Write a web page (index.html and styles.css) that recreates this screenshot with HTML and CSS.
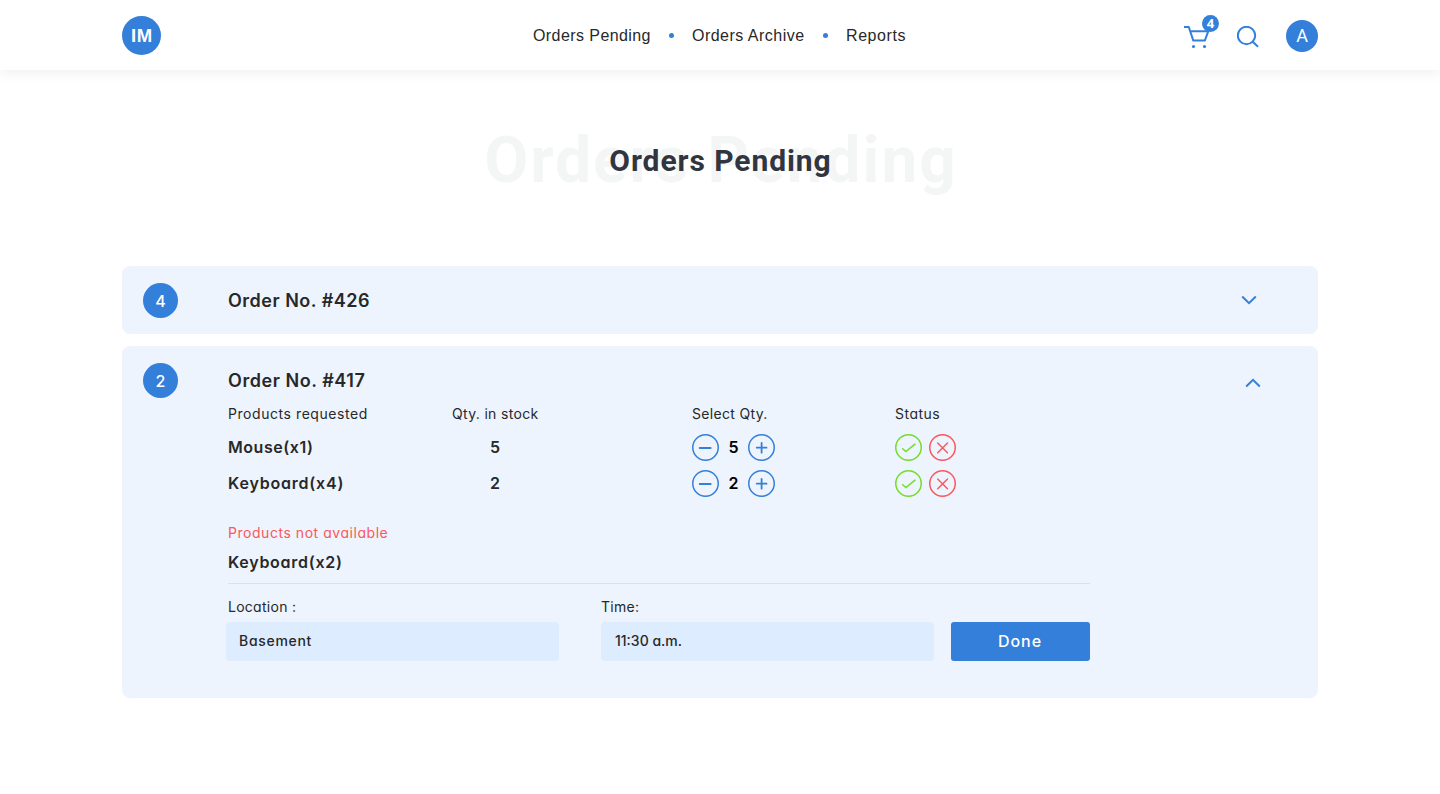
FILE: index.html
```html
<!DOCTYPE html>
<html lang="en">
<head>
<meta charset="utf-8">
<title>Orders Pending</title>
<link rel="stylesheet" href="styles.css">
</head>
<body>
<svg class="defs" width="0" height="0">
  <symbol id="minus" viewBox="0 0 27 27"><circle cx="13.5" cy="13.5" r="12.75" stroke-width="1.5"/><path d="M7.700 14h11" stroke-width="1.8"/></symbol>
  <symbol id="plus" viewBox="0 0 27 27"><circle cx="13.5" cy="13.5" r="12.75" stroke-width="1.5"/><path d="M8.700 13.700h9.800M13.600 8.900v9.800" stroke-width="1.8"/></symbol>
  <symbol id="check" viewBox="0 0 27 27"><circle cx="13.5" cy="13.5" r="12.75" stroke-width="1.5"/><path d="M7.700 14.700l3.200 2.900 9.100-7.400" stroke-width="1.5"/></symbol>
  <symbol id="cross" viewBox="0 0 27 27"><circle cx="13.5" cy="13.5" r="12.75" stroke-width="1.5"/><path d="M8.700 9l9.800 9.800M18.5 9l-9.800 9.800" stroke-width="1.4"/></symbol>
</svg>
<header class="topbar">
  <div class="logo">IM</div>
  <nav class="nav">
    <a class="n1">Orders Pending</a><i class="dot"></i><a class="n2">Orders Archive</a><i class="dot"></i><a class="n3">Reports</a>
  </nav>
  <div class="tools">
    <div class="cart">
      <svg width="28" height="26" viewBox="0 0 28 26" fill="none" stroke="#337fd9" stroke-width="2"><path d="M0 2h4.800L9.300 15.600H20.800L24.300 6.200H6.300" stroke-linejoin="round"/><circle cx="9.500" cy="21.500" r="1.600" fill="#337fd9" stroke="none"/><circle cx="20.500" cy="21.500" r="1.600" fill="#337fd9" stroke="none"/></svg>
      <span class="badge">4</span>
    </div>
    <svg class="search" width="22" height="22" viewBox="0 0 22 22" fill="none" stroke="#337fd9" stroke-width="2"><circle cx="9.500" cy="9.500" r="8.700"/><path d="M15.500 15.500l5.500 5.200"/></svg>
    <div class="avatar">A</div>
  </div>
</header>
<main class="page">
  <div class="hero"><span class="ghost">Orders Pending</span><h1>Orders Pending</h1></div>
  <section class="card closed">
    <div class="head"><span class="count">4</span><h2>Order No. #426</h2>
      <svg class="chev" width="16" height="10" viewBox="0 0 16 10"><path d="M1.200 1.500L8 8.200l6.800-6.700"/></svg></div>
  </section>
  <section class="card open">
    <div class="head"><span class="count">2</span><h2 class="t2">Order No. #417</h2>
      <svg class="chev up" width="16" height="10" viewBox="0 0 16 10"><path d="M1.200 8.500L8 1.800l6.800 6.700"/></svg></div>
    <div class="body">
      <div class="grid labels"><span class="l1">Products requested</span><span class="l2">Qty. in stock</span><span class="l3">Select Qty.</span><span class="l4">Status</span></div>
      <div class="grid item"><b class="p1">Mouse(x1)</b><b class="stock">5</b>
        <div class="pick"><svg class="ic"><use href="#minus"/></svg><b>5</b><svg class="ic"><use href="#plus"/></svg></div>
        <div class="status"><svg class="ic ok"><use href="#check"/></svg><svg class="ic no"><use href="#cross"/></svg></div></div>
      <div class="grid item"><b class="p2">Keyboard(x4)</b><b class="stock">2</b>
        <div class="pick"><svg class="ic"><use href="#minus"/></svg><b>2</b><svg class="ic"><use href="#plus"/></svg></div>
        <div class="status"><svg class="ic ok"><use href="#check"/></svg><svg class="ic no"><use href="#cross"/></svg></div></div>
      <div class="missing"><span class="m1">Products not available</span></div>
      <div class="missing-item"><b class="p3">Keyboard(x2)</b></div>
      <div class="form">
        <div class="field loc"><label>Location :</label><div class="input"><span class="v1">Basement</span></div></div>
        <div class="field time"><label>Time:</label><div class="input"><span class="v2">11:30 a.m.</span></div></div>
        <div class="done"><span>Done</span></div>
      </div>
    </div>
  </section>
</main>
</body>
</html>
```
FILE: styles.css
```css
* { box-sizing: border-box; }
body { margin: 0; background: #fff; color: #282828; font-family: Inter, "Open Sans", sans-serif; font-feature-settings: "cv11" 1; white-space: nowrap; }
h1, h2 { margin: 0; }
.defs { position: absolute; }
.topbar { height: 70px; padding: 0 122px; display: flex; align-items: center; box-shadow: 0 2px 14px rgba(0,0,0,.07); }
.logo { width: 39px; height: 39px; border-radius: 50%; background: #337fd9; color: #fff; font: bold 18.500px/40px "Liberation Sans", sans-serif; text-align: center; letter-spacing: .7px; padding-left: 1px; }
.nav { display: flex; align-items: center; margin-left: 372px; font: 16px/20px "Liberation Sans", sans-serif; }
.nav a { flex: none; padding-top: 2px; }
.n1 { width: 136px; letter-spacing: .42px; }
.n2 { width: 131px; margin-left: 18px; letter-spacing: .48px; }
.n3 { margin-left: 18px; width: 62px; letter-spacing: .58px; }
.dot { width: 5px; height: 5px; border-radius: 50%; background: #337fd9; }
.tools { display: flex; align-items: center; margin-left: auto; padding-top: 2px; }
.cart { position: relative; width: 28px; height: 26px; margin: 4px 25px 0 0; }
.cart svg { display: block; }
.badge { position: absolute; left: 18px; top: -10px; width: 17px; height: 17px; border-radius: 50%; background: #337fd9; color: #fff; font: 700 13px/17px "Noto Sans", sans-serif; text-align: center; }
.search { margin: 2px 27px 0 0; }
.avatar { width: 32px; height: 32px; border-radius: 50%; background: #337fd9; color: #fff; font: 18px/32px Roboto, sans-serif; text-align: center; }
.page { padding: 0 122px; }
.hero { display: grid; height: 196px; place-items: center; padding-bottom: 16px; font-family: Roboto, sans-serif; }
.hero > * { grid-area: 1 / 1; }
.ghost { font-size: 64px; font-weight: 700; color: #f4f6f6; letter-spacing: 1.930px; line-height: 75px; padding-left: 2px; }
h1 { font-size: 30px; font-weight: 700; color: #303540; letter-spacing: .93px; line-height: 36px; padding: 2px 0 0 1px; }
.card { background: #edf4fd; border-radius: 8px; padding: 17px 57px 0 21px; }
.closed { height: 68px; margin-bottom: 12px; }
.open { height: 352px; }
.head { display: flex; align-items: center; height: 35px; }
.count { width: 35px; height: 35px; border-radius: 50%; background: #337fd9; color: #fff; font-size: 16px; font-weight: 500; line-height: 36px; text-align: center; margin-right: 50px; }
h2 { font-size: 18px; font-weight: 600; line-height: 27px; letter-spacing: .5px; }
.t2 { letter-spacing: .55px; }
.chev { margin-left: auto; margin-right: 4px; margin-top: -2px; fill: none; stroke: #337fd9; stroke-width: 2; }
.up { margin-right: 0; margin-top: 5px; }
.body { margin-left: 85px; width: 862px; }
.grid { display: grid; grid-template-columns: 224px 240px 203px 195px; align-items: center; }
.labels { height: 21px; margin: 5px 0 10px; font-size: 14px; }
.l1 { letter-spacing: .56px; }
.l2, .l3 { letter-spacing: .32px; }
.l4 { letter-spacing: .5px; }
.item { height: 27px; margin-bottom: 9px; }
b { font-size: 16px; font-weight: 600; }
.item b { padding-bottom: 2px; }
.p1 { letter-spacing: .55px; }
.p2 { letter-spacing: .8px; }
.p3 { letter-spacing: .72px; }
.stock { width: 86px; text-align: center; }
.pick, .status { display: flex; align-items: center; }
.pick b { width: 29px; text-align: center; color: #000; }
.status { gap: 7px; }
.ic { width: 27px; height: 27px; fill: none; stroke: #337fd9; stroke-linecap: round; display: block; }
.ok { stroke: #73dc2c; }
.no { stroke: #f9585c; }
.missing { height: 21px; margin-top: 25px; font-size: 14px; line-height: 21px; color: #f9585c; letter-spacing: .54px; }
.missing-item { height: 41px; padding-top: 8px; line-height: 22px; border-bottom: 1px solid #cee4f8; }
.form { display: flex; align-items: flex-end; height: 77px; margin-left: -2px; }
.field { width: 333px; font-size: 14px; }
label { display: block; line-height: 21px; margin-bottom: 5px; letter-spacing: .27px; }
.loc label { margin-left: 2px; }
.time { margin-left: 42px; }
.input { height: 39px; border-radius: 4px; background: #deecff; padding-left: 13px; line-height: 38px; font-weight: 500; }
.v1 { letter-spacing: .7px; }
.v2 { margin-left: 1px; }
.done { width: 139px; height: 39px; margin-left: 17px; border-radius: 3px; background: #337fd9; color: #fff; text-align: center; font-size: 16px; font-weight: 500; line-height: 39px; letter-spacing: .95px; padding-right: 1px; }
```
